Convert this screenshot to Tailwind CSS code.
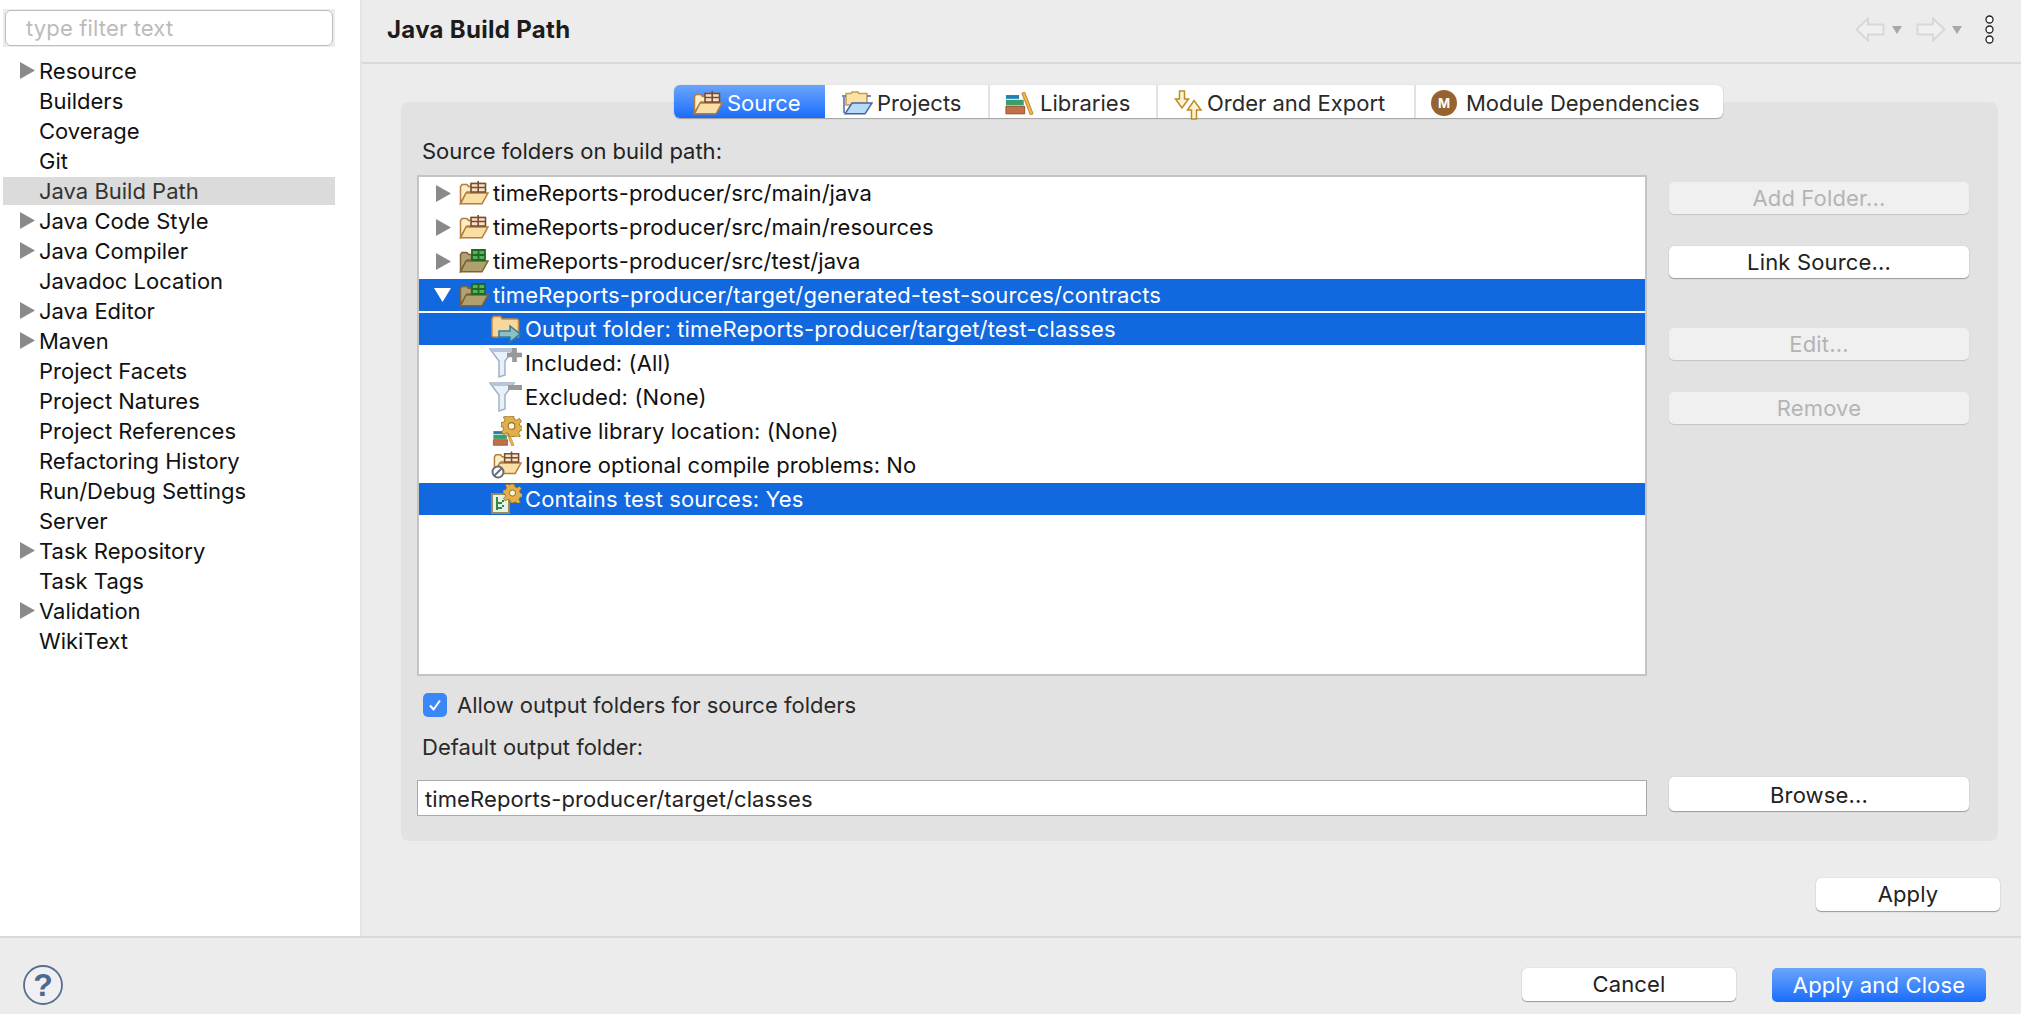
<!DOCTYPE html>
<html lang="en">
<head>
  <meta charset="UTF-8" />
  <title>Java Build Path</title>
  <script src="https://cdn.jsdelivr.net/npm/@tailwindcss/browser@4"></script>
</head>
<body class="bg-[#ececec] font-['Inter','Liberation_Sans',sans-serif] text-[22px] tracking-[0.15px] text-[#222] overflow-hidden">

  <!-- shared icons -->
  <svg class="hidden">
    <symbol id="pkg" viewBox="0 0 30 24">
      <path d="M1.500 22V5.500l1.500-2h5l1.500 2h3v-3h13V11H8L1.500 22z" fill="#fdeec6" stroke="#b27d3e" stroke-width="1.500"/>
      <path d="M1.500 22.800 7 12h22l-6 10.800z" fill="#f9dfa3" stroke="#b27d3e" stroke-width="1.500"/>
      <path d="M12 2.500h14.500V11H12zM19.200 0v11M12 6.500h14.500" fill="#f6e2c4" stroke="#7b4a33" stroke-width="1.600"/>
    </symbol>
    <symbol id="pkg-test" viewBox="0 0 30 24">
      <path d="M1.500 22V5.500l1.500-2h5l1.500 2h3V11H8L1.500 22z" fill="#b3a277" stroke="#7f6231" stroke-width="1.500"/>
      <path d="M1.500 22.800 7 12h22l-6 10.800z" fill="#b0a070" stroke="#7f6231" stroke-width="1.500"/>
      <path d="M13 1h13v10H13zM19.500 0v11M13 6h13" fill="#5cb05c" stroke="#1d6b22" stroke-width="1.800"/>
    </symbol>
    <symbol id="filter" viewBox="0 0 33 30">
      <path d="M1 1h24L16 13v14l-6 2V13z" fill="#e8f0fa" stroke="#a3b0c8" stroke-width="1.500"/>
      <path d="M1 1h24l-3 3H4z" fill="#b8c4d8"/>
    </symbol>
    <symbol id="books" viewBox="0 0 32 24">
      <path d="M1 3h14v4H1z" fill="#1e7fb0"/>
      <path d="M1 8h19v6H1z" fill="#3e9c6c"/>
      <path d="M1 15h20v8H1z" fill="#c0714a" stroke="#8f4a2a"/>
      <path d="M18 1l3-1 9 23-3 1z" fill="#eeb64c" stroke="#b9832c"/>
    </symbol>
    <symbol id="gear" viewBox="0 0 20 20">
      <path d="M8 0h4l.6 3 2.400 1 2.500-1.700 2 2.700-2 2.200.6 2.300 2.500.6v3.600l-2.800.5-1 2.300 1.600 2.500-2.800 2-2-2-2.500.8L12 20H8l-.6-2.900-2.400-1-2.500 1.700-2-2.700 2-2.200L1.900 10.600 0 10V6.400l2.800-.5 1-2.300L2.200 1.100 5 0l2 1.100z" fill="#e2b04a" stroke="#8f6a24" stroke-width=".8"/>
      <circle cx="10" cy="9.500" r="3.200" fill="#fff6dc" stroke="#8f6a24"/>
    </symbol>
  </svg>

  <div class="flex h-[936px]">

    <!-- preference tree -->
    <aside class="w-[362px] shrink-0 bg-white border-r-2 border-[#e4e4e4] pt-[9px] pl-[3px] pr-[25px]">
      <div class="h-[38px] bg-[#ececec] flex items-center px-[2px]">
        <div class="w-full h-[36px] bg-white border border-[#bdbdbd] rounded-[6px] pl-[20px] pt-[1px] flex items-center text-[#bbb]">type filter text</div>
      </div>
      <ul class="mt-[9px] leading-[30px] tracking-normal text-[#111]">
        <li class="h-[30px] flex items-center pl-[17px]"><svg class="w-[15px] h-[17px] mr-[4px] -mt-[2px]" viewBox="0 0 15 17"><path d="M0 0l15 8.500L0 17z" fill="#8a8a8a"/></svg>Resource</li>
        <li class="h-[30px] pl-[36px]">Builders</li>
        <li class="h-[30px] pl-[36px]">Coverage</li>
        <li class="h-[30px] pl-[36px]">Git</li>
        <li class="h-[28px] mt-[1px] mb-[1px] pl-[36px] bg-[#dbdbdb] text-[#333] leading-[28px]">Java Build Path</li>
        <li class="h-[30px] flex items-center pl-[17px]"><svg class="w-[15px] h-[17px] mr-[4px] -mt-[2px]" viewBox="0 0 15 17"><path d="M0 0l15 8.500L0 17z" fill="#8a8a8a"/></svg>Java Code Style</li>
        <li class="h-[30px] flex items-center pl-[17px]"><svg class="w-[15px] h-[17px] mr-[4px] -mt-[2px]" viewBox="0 0 15 17"><path d="M0 0l15 8.500L0 17z" fill="#8a8a8a"/></svg>Java Compiler</li>
        <li class="h-[30px] pl-[36px]">Javadoc Location</li>
        <li class="h-[30px] flex items-center pl-[17px]"><svg class="w-[15px] h-[17px] mr-[4px] -mt-[2px]" viewBox="0 0 15 17"><path d="M0 0l15 8.500L0 17z" fill="#8a8a8a"/></svg>Java Editor</li>
        <li class="h-[30px] flex items-center pl-[17px]"><svg class="w-[15px] h-[17px] mr-[4px] -mt-[2px]" viewBox="0 0 15 17"><path d="M0 0l15 8.500L0 17z" fill="#8a8a8a"/></svg>Maven</li>
        <li class="h-[30px] pl-[36px]">Project Facets</li>
        <li class="h-[30px] pl-[36px]">Project Natures</li>
        <li class="h-[30px] pl-[36px]">Project References</li>
        <li class="h-[30px] pl-[36px]">Refactoring History</li>
        <li class="h-[30px] pl-[36px]">Run/Debug Settings</li>
        <li class="h-[30px] pl-[36px]">Server</li>
        <li class="h-[30px] flex items-center pl-[17px]"><svg class="w-[15px] h-[17px] mr-[4px] -mt-[2px]" viewBox="0 0 15 17"><path d="M0 0l15 8.500L0 17z" fill="#8a8a8a"/></svg>Task Repository</li>
        <li class="h-[30px] pl-[36px]">Task Tags</li>
        <li class="h-[30px] flex items-center pl-[17px]"><svg class="w-[15px] h-[17px] mr-[4px] -mt-[2px]" viewBox="0 0 15 17"><path d="M0 0l15 8.500L0 17z" fill="#8a8a8a"/></svg>Validation</li>
        <li class="h-[30px] pl-[36px]">WikiText</li>
      </ul>
    </aside>

    <main class="flex-1 flex flex-col min-w-0">
      <!-- title bar -->
      <header class="h-[64px] shrink-0 border-b-2 border-[#d9d9d9] flex items-center pl-[25px] pr-[27px]">
        <h1 class="font-bold text-[24px] tracking-[0.3px] text-[#1c1c1c] -mt-[2px]">Java Build Path</h1>
        <div class="ml-auto flex items-center -mt-[3px]">
          <svg class="w-[30px] h-[25px]" viewBox="0 0 30 25"><path d="M1.500 12.500 13 1.500v6h15.500v10H13v6z" fill="#f0f0f0" stroke="#d8d8d8" stroke-width="2"/></svg>
          <svg class="w-[10px] h-[8px] ml-[7px]" viewBox="0 0 10 8"><path d="M0 0h10L5 8z" fill="#a8a8a8"/></svg>
          <svg class="w-[30px] h-[25px] ml-[14px]" viewBox="0 0 30 25"><path d="M28.500 12.500 17 1.500v6H1.500v10H17v6z" fill="#f0f0f0" stroke="#d8d8d8" stroke-width="2"/></svg>
          <svg class="w-[10px] h-[8px] ml-[6px]" viewBox="0 0 10 8"><path d="M0 0h10L5 8z" fill="#a8a8a8"/></svg>
          <svg class="w-[9px] h-[29px] ml-[23px]" viewBox="0 0 9 29"><g fill="#fff" stroke="#222" stroke-width="1.300"><circle cx="4.500" cy="4.500" r="3.500"/><circle cx="4.500" cy="14.500" r="3.500"/><circle cx="4.500" cy="24.500" r="3.500"/></g></svg>
        </div>
      </header>

      <div class="pl-[39px] pr-[23px] pt-[21px]">
        <!-- tabs -->
        <div class="relative z-10 flex h-[33px] w-[1049px] ml-[273px] bg-white rounded-[6px] shadow-[0_1px_1px_#a0a0a0,0_0_1px_#bbb] tracking-normal text-[#2a2a2a]">
          <div class="w-[151px] pl-[19px] pt-[3px] flex items-center rounded-l-[6px] bg-gradient-to-b from-[#6aa5fb] to-[#176bfb] text-white">
            <svg class="w-[30px] h-[24px] mr-[4px]"><use href="#pkg"/></svg>Source
          </div>
          <div class="w-[163px] pl-[16px] pt-[3px] flex items-center">
            <svg class="w-[32px] h-[24px] mr-[4px]" viewBox="0 0 32 24"><path d="M5 6V2.500h5l1-1.500h6l1 1.500H26V14H5z" fill="#fbe3a6" stroke="#c49a58" stroke-width="1.500"/><path d="M1 5h4M26 5h4M3 6v16" stroke="#5468a8" stroke-width="1.500" fill="none"/><path d="M4 22.800 11 12h20l-7 10.800z" fill="#b6dcf5" stroke="#4a5ea8" stroke-width="1.500"/></svg>Projects
          </div>
          <div class="w-[168px] pl-[15px] pt-[3px] flex items-center border-l-2 border-[#e2e2e2]">
            <svg class="w-[30px] h-[25px] mr-[5px]"><use href="#books"/></svg>Libraries
          </div>
          <div class="w-[258px] pl-[15px] pt-[3px] flex items-center border-l-2 border-[#e2e2e2]">
            <svg class="w-[31px] h-[30px] mr-[3px] self-start mt-[2px] shrink-0" viewBox="0 0 28 30"><path d="M5 1h5v8h4L7.500 18 1 9h4z" fill="#fdf3d0" stroke="#c08a28" stroke-width="1.500"/><path d="M17 29h5v-9h4.500L19.500 10.500 13 20h4z" fill="#fdf3d0" stroke="#c08a28" stroke-width="1.500"/></svg>Order and Export
          </div>
          <div class="w-[309px] pl-[15px] pt-[3px] flex items-center border-l-2 border-[#e2e2e2]">
            <div class="w-[26px] h-[26px] mr-[9px] rounded-full bg-[#96632f] text-white font-bold text-[13px] leading-none flex items-center justify-center">M</div>Module Dependencies
          </div>
        </div>

        <!-- group panel -->
        <section class="-mt-[16px] h-[739px] bg-[#e2e2e2] rounded-[8px] px-[16px] pt-[34px]">
          <p class="h-[30px] leading-[30px] pl-[5px] mb-[9px] tracking-normal">Source folders on build path:</p>
          <div class="flex">
            <div class="w-[1230px] h-[501px] bg-white border-2 border-[#c4c4c4] text-[#111]">
              <div class="h-[32px] mb-[2px] flex items-center pl-[17px] tracking-[0.05px]"><svg class="w-[15px] h-[17px] mr-[8px]" viewBox="0 0 15 17"><path d="M0 0l15 8.500L0 17z" fill="#8a8a8a"/></svg><svg class="w-[30px] h-[24px] mr-[4px]"><use href="#pkg"/></svg>timeReports-producer/src/main/java</div>
              <div class="h-[32px] mb-[2px] flex items-center pl-[17px] tracking-[0.05px]"><svg class="w-[15px] h-[17px] mr-[8px]" viewBox="0 0 15 17"><path d="M0 0l15 8.500L0 17z" fill="#8a8a8a"/></svg><svg class="w-[30px] h-[24px] mr-[4px]"><use href="#pkg"/></svg>timeReports-producer/src/main/resources</div>
              <div class="h-[32px] mb-[2px] flex items-center pl-[17px] tracking-[0.05px]"><svg class="w-[15px] h-[17px] mr-[8px]" viewBox="0 0 15 17"><path d="M0 0l15 8.500L0 17z" fill="#8a8a8a"/></svg><svg class="w-[30px] h-[24px] mr-[4px]"><use href="#pkg-test"/></svg>timeReports-producer/src/test/java</div>
              <div class="h-[32px] mb-[2px] flex items-center pl-[15px] bg-[#1268df] text-white"><svg class="w-[17px] h-[14px] mr-[8px]" viewBox="0 0 17 14"><path d="M0 0h17L8.500 14z" fill="#fff"/></svg><svg class="w-[30px] h-[24px] mr-[4px]"><use href="#pkg-test"/></svg>timeReports-producer/target/generated-test-sources/contracts</div>
              <div class="h-[32px] mb-[2px] flex items-center pl-[72px] bg-[#1268df] text-white"><svg class="w-[30px] h-[28px] mr-[4px]" viewBox="0 0 30 28"><path d="M1 4l1.500-2.500h7L11 4h14.500a2 2 0 0 1 2 2v16H3a2 2 0 0 1-2-2z" fill="#f8d79c" stroke="#c98a3e" stroke-width="1.500"/><path d="M8 16h11v-5l10 8-10 8v-5H8z" fill="#8cc0c4" stroke="#2f7f9a" stroke-width="1.500"/></svg>Output folder: timeReports-producer/target/test-classes</div>
              <div class="h-[32px] mb-[2px] flex items-center pl-[70px]"><span class="relative w-[33px] h-[30px] mr-[3px]"><svg class="w-[33px] h-[30px]"><use href="#filter"/></svg><svg class="absolute right-0 top-0 w-[15px] h-[14px]" viewBox="0 0 15 14"><path d="M5.500 0h4v5H15v4H9.500v5h-4V9H0V5h5.500z" fill="#999" stroke="#888" stroke-width=".5"/></svg></span>Included: (All)</div>
              <div class="h-[32px] mb-[2px] flex items-center pl-[70px]"><span class="relative w-[33px] h-[30px] mr-[3px]"><svg class="w-[33px] h-[30px]"><use href="#filter"/></svg><svg class="absolute right-0 top-[3px] w-[14px] h-[5px]" viewBox="0 0 14 5"><path d="M0 0h14v5H0z" fill="#999"/></svg></span>Excluded: (None)</div>
              <div class="h-[32px] mb-[2px] flex items-center pl-[72px] tracking-[0.1px]"><span class="relative w-[31px] h-[30px] mr-[3px]"><svg class="absolute left-0 bottom-0 w-[26px] h-[17px]"><use href="#books"/></svg><svg class="absolute right-0 top-0 w-[21px] h-[21px]"><use href="#gear"/></svg></span>Native library location: (None)</div>
              <div class="h-[32px] mb-[2px] flex items-center pl-[72px] tracking-[0.05px]"><span class="relative w-[31px] h-[28px] mr-[3px]"><svg class="absolute right-0 top-0 w-[29px] h-[24px]"><use href="#pkg"/></svg><svg class="absolute left-0 bottom-0 w-[14px] h-[14px]" viewBox="0 0 14 14"><circle cx="7" cy="7" r="5.500" fill="#fff" stroke="#666c78" stroke-width="2"/><path d="M3.500 10.500l7-7" stroke="#666c78" stroke-width="2"/></svg></span>Ignore optional compile problems: No</div>
              <div class="h-[32px] flex items-center pl-[72px] bg-[#1268df] text-white tracking-[0.1px]"><span class="relative w-[31px] h-[30px] mr-[3px]"><svg class="absolute left-0 bottom-0 w-[19px] h-[21px]" viewBox="0 0 19 21"><path d="M1 1h17v19H1z" fill="#e6f2e4" stroke="#9a8a58" stroke-width="2"/><path d="M6 5v11M6 10h4M6 15h4M12 8v0M12 13v0" stroke="#2f8a4a" stroke-width="2" stroke-linecap="square"/></svg><svg class="absolute right-0 top-0 w-[19px] h-[19px]"><use href="#gear"/></svg></span>Contains test sources: Yes</div>
            </div>
            <div class="ml-[22px] w-[300px] pt-[7px]">
              <button class="block w-full h-[32px] mb-[32px] rounded-[5px] bg-[#f0f0f0] text-[#b4b4b4] shadow-[0_1px_1px_#c4c4c4]">Add Folder...</button>
              <button class="block w-full h-[32px] mb-[50px] rounded-[5px] bg-white text-[#222] shadow-[0_1px_1px_#999,0_0_1px_#aaa]">Link Source...</button>
              <button class="block w-full h-[32px] mb-[32px] rounded-[5px] bg-[#f0f0f0] text-[#b4b4b4] shadow-[0_1px_1px_#c4c4c4]">Edit...</button>
              <button class="block w-full h-[32px] rounded-[5px] bg-[#f0f0f0] text-[#b4b4b4] shadow-[0_1px_1px_#c4c4c4]">Remove</button>
            </div>
          </div>
          <div class="flex items-center h-[30px] mt-[14px] pl-[6px]">
            <div class="w-[24px] h-[24px] rounded-[5px] bg-[#3b87f6] flex items-center justify-center mr-[10px]">
              <svg class="w-[14px] h-[14px]" viewBox="0 0 14 14"><path d="M2 7.500 5.500 11.500 12 2.500" fill="none" stroke="#fff" stroke-width="2"/></svg>
            </div>
            <span class="pt-[1px] tracking-normal text-[#2a2a2a]">Allow output folders for source folders</span>
          </div>
          <p class="h-[30px] leading-[30px] pl-[5px] mt-[12px] tracking-normal text-[#2a2a2a]">Default output folder:</p>
          <div class="flex items-start mt-[15px]">
            <div class="w-[1230px] h-[36px] mt-[3px] pt-[3px] bg-white border border-[#a9a9a9] pl-[7px] flex items-center tracking-[0.1px] text-[#222]">timeReports-producer/target/classes</div>
            <button class="ml-[22px] w-[300px] h-[34px] pt-[2px] rounded-[5px] bg-white text-[#222] shadow-[0_1px_1px_#999,0_0_1px_#aaa]">Browse...</button>
          </div>
        </section>

        <div class="flex justify-end mt-[37px] -mr-[2px]">
          <button class="w-[184px] h-[33px] rounded-[5px] bg-white text-[#222] shadow-[0_1px_1px_#999,0_0_1px_#aaa]">Apply</button>
        </div>
      </div>
    </main>
  </div>

  <!-- bottom bar -->
  <footer class="h-[78px] border-t-2 border-[#d9d9d9] flex items-start pl-[23px] pr-[35px] pt-[27px]">
    <svg class="w-[40px] h-[40px]" viewBox="0 0 40 40"><circle cx="20" cy="20" r="19" fill="#f0f0f2" stroke="#55708f" stroke-width="1.800"/><text x="20" y="31" text-anchor="middle" font-family="Liberation Sans" font-weight="700" font-size="32" fill="#4f6a8f">?</text></svg>
    <button class="ml-auto mt-[3px] w-[214px] h-[33px] rounded-[5px] bg-white text-[#222] shadow-[0_1px_1px_#999,0_0_1px_#aaa]">Cancel</button>
    <button class="ml-[36px] mt-[3px] w-[214px] h-[34px] rounded-[5px] bg-gradient-to-b from-[#6aa5fb] to-[#176bfb] text-white">Apply and Close</button>
  </footer>
</body>
</html>
